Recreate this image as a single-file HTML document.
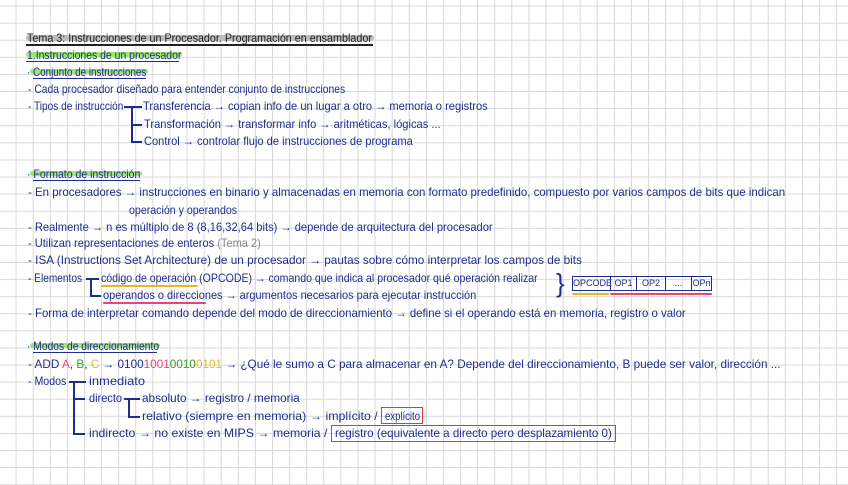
<!DOCTYPE html>
<html><head><meta charset="utf-8"><style>
html,body{margin:0;padding:0;}
body{width:848px;height:485px;overflow:hidden;position:relative;background-color:#fff;
background-image:linear-gradient(to right,#d8d8d8 1px,transparent 1px),linear-gradient(to bottom,#d8d8d8 1px,transparent 1px);
background-size:17.1px 17.1px;background-position:15.6px 5.6px;font-family:"Liberation Sans",sans-serif;}
.l{position:absolute;white-space:nowrap;font-size:12px;line-height:14px;color:#1f2d8e;transform-origin:0 50%;}
.t{color:#222;}
.hl{position:absolute;height:5px;border-radius:3px;}
.ln{position:absolute;background:#1f2d8e;}
.p{color:#e8457a}.g{color:#3a9a2a}.y{color:#e8b81c}.gr{color:#888}
.box{position:absolute;border:1.5px solid #e53935;}
</style></head><body>
<div class="hl" style="left:26px;top:35px;width:348px;background:#bdbdbd;height:6px"></div>
<div class="hl" style="left:26px;top:52px;width:156px;background:#9be86d"></div>
<div class="hl" style="left:30px;top:69px;width:118px;background:#9be86d"></div>
<div class="hl" style="left:30px;top:171px;width:112px;background:#9be86d"></div>
<div class="hl" style="left:30px;top:343px;width:130px;background:#9be86d"></div>
<div class="ln" style="left:26px;top:44px;width:347px;height:2px;background:#222"></div>
<div class="ln" style="left:26px;top:61px;width:153px;height:1px"></div>
<div class="ln" style="left:33px;top:78px;width:113px;height:1px"></div>
<div class="ln" style="left:33px;top:180px;width:107px;height:1px"></div>
<div class="ln" style="left:33px;top:352px;width:124px;height:1px"></div>

<div class="l t" style="left:27px;top:31px" data-w="345">Tema 3: Instrucciones de un Procesador. Programación en ensamblador</div>
<div class="l" style="left:27px;top:48px" data-w="154">1.Instrucciones de un procesador</div>
<div class="l" style="left:27px;top:65px" data-w="119">· Conjunto de instrucciones</div>
<div class="l" style="left:28px;top:82px" data-w="317">- Cada procesador diseñado para entender conjunto de instrucciones</div>
<div class="l" style="left:28px;top:99px" data-w="95">- Tipos de instrucción</div>
<div class="l" style="left:143px;top:99px" data-w="345">Transferencia → copian info de un lugar a otro → memoria o registros</div>
<div class="l" style="left:144px;top:117px" data-w="297">Transformación → transformar info → aritméticas, lógicas ...</div>
<div class="l" style="left:144px;top:134px" data-w="269">Control → controlar flujo de instrucciones de programa</div>
<div class="ln" style="left:124px;top:106px;width:18px;height:1.5px"></div>
<div class="ln" style="left:131px;top:106px;width:1.5px;height:36px"></div>
<div class="ln" style="left:131px;top:124px;width:11px;height:1.5px"></div>
<div class="ln" style="left:131px;top:141px;width:11px;height:1.5px"></div>

<div class="l" style="left:27px;top:167px" data-w="113">· Formato de instrucción</div>
<div class="l" style="left:28px;top:185px" data-w="757">- En procesadores → instrucciones en binario y almacenadas en memoria con formato predefinido, compuesto por varios campos de bits que indican</div>
<div class="l" style="left:129px;top:203px" data-w="108">operación y operandos</div>
<div class="l" style="left:28px;top:220px" data-w="465">- Realmente → n es múltiplo de 8 (8,16,32,64 bits) → depende de arquitectura del procesador</div>
<div class="l" style="left:28px;top:236px" data-w="233">- Utilizan representaciones de enteros <span class="gr">(Tema 2)</span></div>
<div class="l" style="left:28px;top:253px" data-w="554">- ISA (Instructions Set Architecture) de un procesador → pautas sobre cómo interpretar los campos de bits</div>
<div class="l" style="left:28px;top:271px" data-w="54">- Elementos</div>
<div class="l" style="left:101px;top:271px" data-w="437">código de operación (OPCODE) → comando que indica al procesador qué operación realizar</div>
<div class="l" style="left:103px;top:288px" data-w="373">operandos o direcciones → argumentos necesarios para ejecutar instrucción</div>
<div class="ln" style="left:86px;top:278px;width:13px;height:1.5px"></div>
<div class="ln" style="left:90px;top:278px;width:1.5px;height:17px"></div>
<div class="ln" style="left:90px;top:295px;width:11px;height:1.5px"></div>
<div class="hl" style="left:101px;top:285px;width:97px;height:2px;background:#e8b81c"></div>
<div class="hl" style="left:103px;top:302px;width:103px;height:2px;background:#e8457a"></div>
<div class="l" style="left:28px;top:306px" data-w="658">- Forma de interpretar comando depende del modo de direccionamiento → define si el operando está en memoria, registro o valor</div>

<div class="l" style="left:556px;top:268px;font-size:26px;line-height:30px;color:#1f2d8e">}</div>
<div style="position:absolute;left:572px;top:276px;width:140px;height:15px;border:1.2px solid #1f2d8e;display:flex;font-size:9px;color:#1f2d8e;line-height:13px;box-sizing:border-box">
<div style="width:37px;border-right:1.2px solid #1f2d8e;text-align:center">OPCODE</div>
<div style="width:25px;border-right:1.2px solid #1f2d8e;text-align:center">OP1</div>
<div style="width:28px;border-right:1.2px solid #1f2d8e;text-align:center">OP2</div>
<div style="width:25px;border-right:1.2px solid #1f2d8e;text-align:center">...</div>
<div style="flex:1;text-align:center">OPn</div></div>
<div class="hl" style="left:572px;top:293px;width:37px;height:2px;background:#e8b81c"></div>
<div class="hl" style="left:610px;top:293px;width:102px;height:2px;background:#e8457a"></div>

<div class="l" style="left:27px;top:339px" data-w="132">· Modos de direccionamiento</div>
<div class="l" style="left:28px;top:357px" data-w="753">- ADD <span class="p">A</span>, <span class="g">B</span>, <span class="y">C</span> → 0100<span class="p">1001</span><span class="g">0010</span><span class="y">0101</span> → ¿Qué le sumo a C para almacenar en A? Depende del direccionamiento, B puede ser valor, dirección ...</div>
<div class="l" style="left:28px;top:374px" data-w="38">- Modos</div>
<div class="l" style="left:89px;top:374px" data-w="56">inmediato</div>
<div class="l" style="left:89px;top:391px" data-w="33">directo</div>
<div class="l" style="left:142px;top:391px" data-w="158">absoluto → registro / memoria</div>
<div class="l" style="left:142px;top:409px" data-w="236">relativo (siempre en memoria) → implícito /</div>
<div class="l" style="left:385px;top:409px" data-w="35">explícito</div>
<div class="l" style="left:89px;top:426px" data-w="238">indirecto → no existe en MIPS → memoria /</div>
<div class="l" style="left:335px;top:426px" data-w="277">registro (equivalente a directo pero desplazamiento 0)</div>
<div class="ln" style="left:69px;top:381px;width:17px;height:1.5px"></div>
<div class="ln" style="left:73px;top:381px;width:1.5px;height:53px"></div>
<div class="ln" style="left:73px;top:398px;width:12px;height:1.5px"></div>
<div class="ln" style="left:73px;top:433px;width:12px;height:1.5px"></div>
<div class="ln" style="left:124px;top:398px;width:16px;height:1.5px"></div>
<div class="ln" style="left:128px;top:398px;width:1.5px;height:18px"></div>
<div class="ln" style="left:128px;top:416px;width:12px;height:1.5px"></div>
<div class="box" style="left:381px;top:407px;width:40px;height:15px"></div>
<div class="box" style="left:331px;top:425px;width:283px;height:15px"></div>
<script>
document.querySelectorAll('.l[data-w]').forEach(function(e){var w=+e.getAttribute('data-w');var s=e.scrollWidth;if(s>0)e.style.transform='scaleX('+(w/s)+')';});
</script>
</body></html>
